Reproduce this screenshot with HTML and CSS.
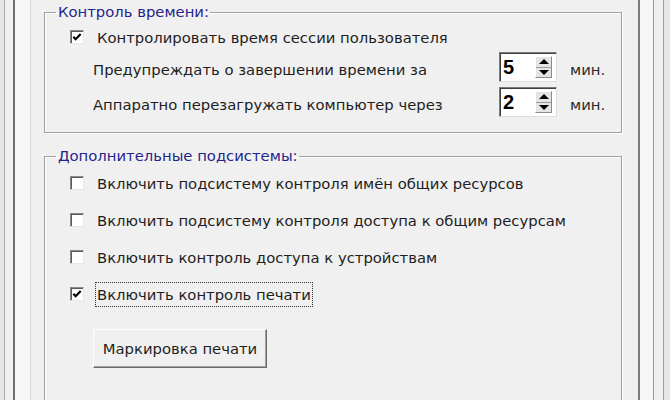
FILE: index.html
```html
<!DOCTYPE html>
<html lang="ru">

<head>
    <meta charset="UTF-8">
    <title>Настройки</title>
    <link rel="stylesheet" href="styles.css">
</head>

<body>
    <div class="frame-a">
        <div class="frame-b">
            <div class="frame-c">

                <!-- контроль времени -->
                <fieldset class="group group-time">
                    <legend>Контроль времени:</legend>
                    <div class="row check-row first">
                        <span class="check checked"><svg viewBox="0 0 13 13"><path d="M2.5 6.2 L5 8.8 L10.5 3.2" /></svg></span>
                        <span class="label">Контролировать время сессии пользователя</span>
                    </div>
                    <div class="row spin-row">
                        <span class="spin-label">Предупреждать о завершении времени за</span>
                        <div class="spin">
                            <span class="spin-value">5</span>
                            <span class="spin-btn"><i class="up"></i><i class="down"></i></span>
                        </div>
                        <span class="unit">мин.</span>
                    </div>
                    <div class="row spin-row second">
                        <span class="spin-label">Аппаратно перезагружать компьютер через</span>
                        <div class="spin">
                            <span class="spin-value">2</span>
                            <span class="spin-btn"><i class="up"></i><i class="down"></i></span>
                        </div>
                        <span class="unit">мин.</span>
                    </div>
                </fieldset>

                <!-- подсистемы -->
                <fieldset class="group group-sub">
                    <legend>Дополнительные подсистемы:</legend>
                    <div class="row check-row first">
                        <span class="check"></span>
                        <span class="label">Включить подсистему контроля имён общих ресурсов</span>
                    </div>
                    <div class="row check-row">
                        <span class="check"></span>
                        <span class="label">Включить подсистему контроля доступа к общим ресурсам</span>
                    </div>
                    <div class="row check-row">
                        <span class="check"></span>
                        <span class="label">Включить контроль доступа к устройствам</span>
                    </div>
                    <div class="row check-row">
                        <span class="check checked"><svg viewBox="0 0 13 13"><path d="M2.5 6.2 L5 8.8 L10.5 3.2" /></svg></span>
                        <span class="label focused">Включить контроль печати</span>
                    </div>
                    <button class="btn" type="button">Маркировка печати</button>
                </fieldset>

            </div>
        </div>
    </div>
</body>

</html>
```

FILE: styles.css
```css
* {
    margin: 0;
    padding: 0;
    box-sizing: border-box;
}

body {
    width: 670px;
    height: 400px;
    overflow: hidden;
    background-color: #e6e6e6;
    font-family: "DejaVu Sans", Tahoma, sans-serif;
    font-size: 14.8px;
    color: #1e1e1e;
}

/* window edges */
.frame-a {
    width: 660px;
    height: 400px;
    margin-left: 4px;
    border-left: 1px solid #a8a8a8;
    border-right: 1px solid #a0a0a0;
    background-color: #f0f0f0;
    padding: 0 9px 0 8px;
}

.frame-b {
    height: 100%;
    border-left: 2px solid #6e6e6e;
    border-right: 1px solid #9a9a9a;
    background-color: #f6f6f6;
    padding: 0 13px 0 15px;
}

.frame-c {
    height: 100%;
    border-left: 1px solid #d4d4d4;
    border-right: 2px solid #7c7c7c;
    background-color: #f0f0f0;
    padding: 3px 16px 0 13px;
}

/* group boxes */
.group {
    border: 1px solid #a0a0a0;
    box-shadow: 1px 1px 0 #ffffff, inset 1px 1px 0 #ffffff;
    padding: 0 0 0 25px;
}

.group legend {
    margin-left: -14px;
    padding: 0 1px 0 2px;
    line-height: 18px;
    color: #23238c;
}

.group-time {
    padding-bottom: 15px;
}

.group-sub {
    margin-top: 14px;
    height: 300px;
}

.row {
    display: flex;
    align-items: center;
}

.check-row {
    height: 26px;
    margin-top: 11px;
}

.check-row.first {
    margin-top: 5px;
}

.group-time .check-row.first {
    margin-top: 4px;
    height: 24px;
}

.check {
    width: 14px;
    height: 14px;
    background-color: #ffffff;
    border: 1px solid;
    border-color: #8a8a8a #e8e8e8 #e8e8e8 #8a8a8a;
    box-shadow: inset 1px 1px 0 #5a5a5a;
    display: flex;
}

.check svg {
    width: 12px;
    height: 12px;
    fill: none;
    stroke: #000000;
    stroke-width: 2.3;
}

.label {
    margin-left: 13px;
    white-space: nowrap;
}

.label.focused {
    margin-left: 11px;
    border: 1px dotted #333333;
    padding: 3px 1px;
}

/* spin rows */
.spin-row {
    height: 30px;
    margin-top: 3px;
}

.spin-row.second {
    margin-top: 5px;
}

.spin-label {
    width: 429px;
    padding-left: 23px;
    padding-top: 5px;
    white-space: nowrap;
}

.unit {
    margin-left: 13px;
    padding-top: 5px;
    color: #2a2a2a;
}

.spin {
    width: 58px;
    height: 30px;
    background-color: #ffffff;
    border: 1px solid;
    border-color: #7a7a7a #dcdcdc #dcdcdc #7a7a7a;
    box-shadow: inset 1px 1px 0 #404040;
    display: flex;
    justify-content: space-between;
    padding: 3px 4px 3px 3px;
}

.spin-value {
    font-family: "Liberation Sans", Arial, sans-serif;
    font-weight: bold;
    font-size: 20px;
    line-height: 22px;
    color: #000000;
}

.spin-btn {
    width: 17px;
    display: flex;
    flex-direction: column;
    background-color: #e4e4e4;
    border: 1px solid;
    border-color: #ffffff #8a8a8a #8a8a8a #ffffff;
}

.spin-btn i {
    flex: 1;
    display: flex;
    align-items: center;
    justify-content: center;
}

.spin-btn .up {
    border-bottom: 1px solid #9a9a9a;
}

.spin-btn .up::before {
    content: "";
    border-left: 5px solid transparent;
    border-right: 5px solid transparent;
    border-bottom: 5px solid #000000;
}

.spin-btn .down::before {
    content: "";
    border-left: 5px solid transparent;
    border-right: 5px solid transparent;
    border-top: 5px solid #000000;
}

/* button */
.btn {
    display: block;
    margin: 22px 0 0 23px;
    width: 174px;
    height: 39px;
    font-family: inherit;
    font-size: 14.8px;
    color: #1e1e1e;
    background-color: #f0f0f0;
    border: 1px solid;
    border-color: #ffffff #6a6a6a #6a6a6a #ffffff;
    box-shadow: inset -1px -1px 0 #a0a0a0;
}
```
